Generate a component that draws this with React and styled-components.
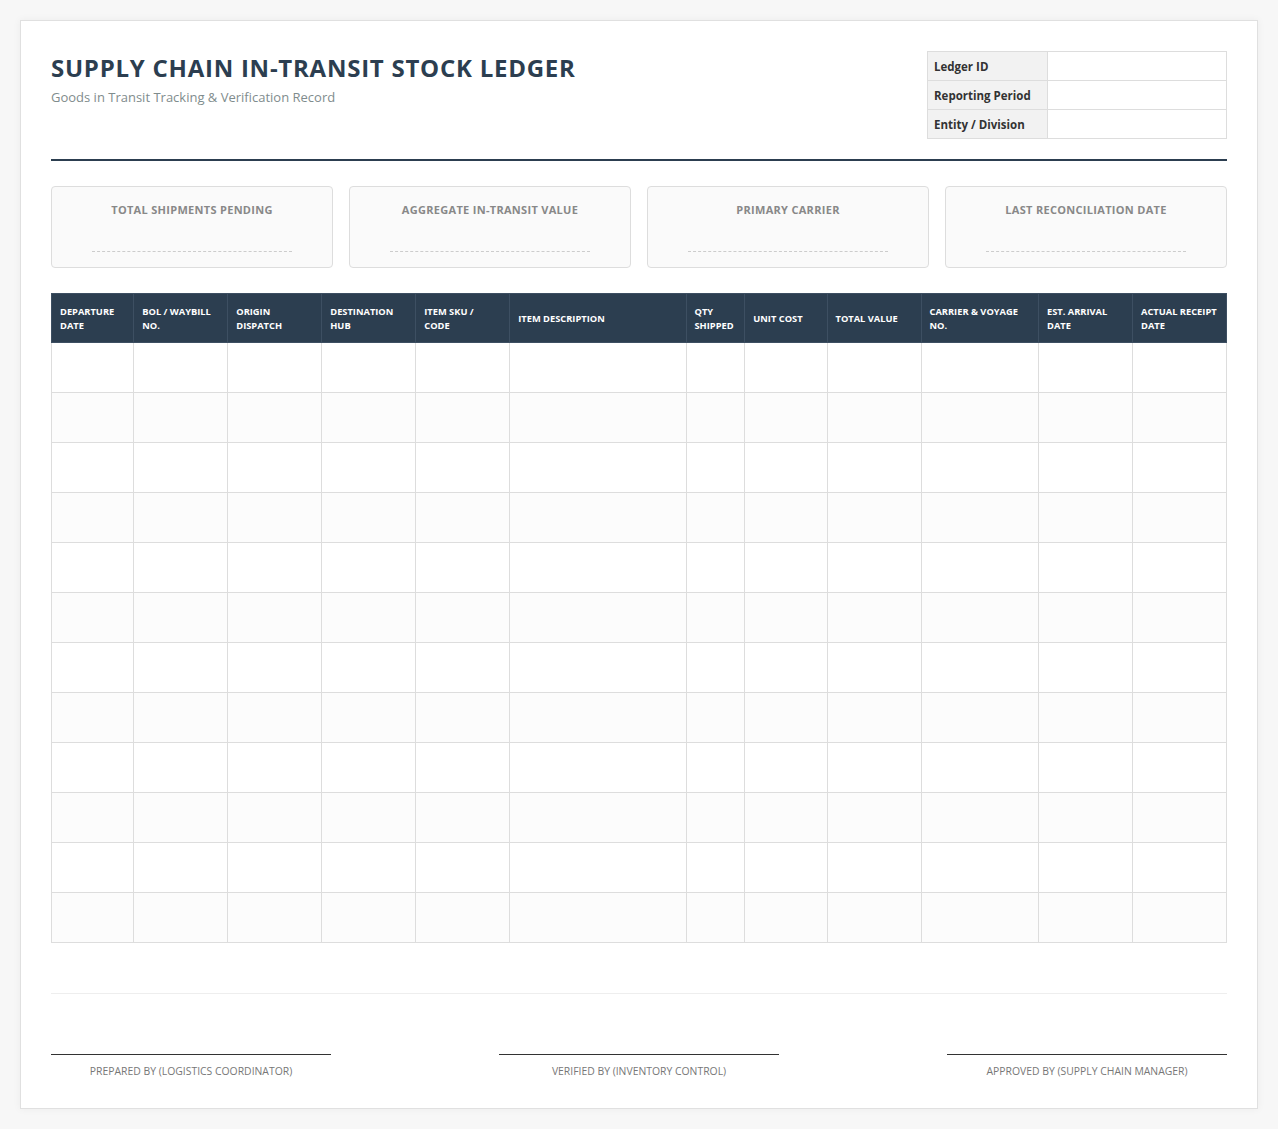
import React from 'react';
import styled, { createGlobalStyle } from 'styled-components';

const GlobalStyle = createGlobalStyle`
  * { box-sizing: border-box; }
  body {
    margin: 0;
    padding: 20px;
    background: #f7f7f7;
    font-family: "Open Sans", "Liberation Sans", sans-serif;
    color: #333;
  }
`

const Page = styled.div`
  background: #fff;
  border: 1px solid #e0e0e0;
  box-shadow: 0 0 8px rgba(0, 0, 0, 0.05);
  padding: 30px;
`

const Header = styled.div`
  display: flex;
  justify-content: space-between;
  align-items: flex-start;
  padding-bottom: 20px;
  border-bottom: 2px solid #2c3e50;
  margin-bottom: 25px;
`

const Title = styled.h1`
  margin: 0;
  padding-top: 1px;
  font-size: 24px;
  line-height: 32px;
  font-weight: 700;
  letter-spacing: 0.75px;
  color: #2c3e50;
`

const Subtitle = styled.div`
  margin-top: 4px;
  font-size: 13px;
  color: #7f8c8d;
`

const MetaTable = styled.table`
  width: 300px;
  border-collapse: collapse;
  font-size: 11.5px;
`

const MetaLabel = styled.td`
  width: 120px;
  height: 29px;
  padding: 0 6px;
  background: #f2f2f2;
  border: 1px solid #ddd;
  font-weight: 700;
  color: #333;
`

const MetaValue = styled.td`
  border: 1px solid #ddd;
`

const Summary = styled.div`
  display: grid;
  grid-template-columns: repeat(4, 1fr);
  gap: 16px;
  margin-bottom: 25px;
`

const Card = styled.div`
  background: #fafafa;
  border: 1px solid #ddd;
  border-radius: 4px;
  padding: 15px;
  text-align: center;
`

const CardLabel = styled.div`
  font-size: 11px;
  font-weight: 700;
  text-transform: uppercase;
  letter-spacing: 0.3px;
  color: #888;
`

const CardValue = styled.div`
  width: 80%;
  height: 35px;
  margin: 0 auto;
  border-bottom: 1px dashed #ccc;
`

const Ledger = styled.table`
  width: 100%;
  border-collapse: collapse;
  table-layout: fixed;
`

const Th = styled.th`
  width: ${p => p.$w}%;
  height: 49px;
  padding: 2px 4px 0 8px;
  background: #2c3e50;
  border: 1px solid #3d4f62;
  color: #fff;
  font-size: 9.3px;
  line-height: 14px;
  font-weight: 700;
  text-align: left;
  text-transform: uppercase;
  white-space: pre-line;
`

const Row = styled.tr`
  background: ${p => (p.$alt ? '#fcfcfc' : '#fff')};
`

const Td = styled.td`
  height: 50px;
  border: 1px solid #ddd;
`

const Footer = styled.div`
  margin-top: 50px;
  padding-top: 60px;
  border-top: 1px solid #eee;
  display: flex;
  justify-content: space-between;
`

const Signature = styled.div`
  width: 280px;
  border-top: 1px solid #333;
  padding-top: 9px;
  text-align: center;
  font-size: 10.4px;
  line-height: 14px;
  color: #777;
`

const columns = [
  ['Departure Date', 7],
  ['BOL / Waybill No.', 8],
  ['Origin Dispatch', 8],
  ['Destination Hub', 8],
  ['Item SKU /\nCode', 8],
  ['Item Description', 15],
  ['Qty Shipped', 5],
  ['Unit Cost', 7],
  ['Total Value', 8],
  ['Carrier & Voyage No.', 10],
  ['Est. Arrival Date', 8],
  ['Actual Receipt Date', 8],
]

const cards = [
  'Total Shipments Pending',
  'Aggregate In-Transit Value',
  'Primary Carrier',
  'Last Reconciliation Date',
]

const meta = ['Ledger ID', 'Reporting Period', 'Entity / Division']

const signatures = [
  'PREPARED BY (LOGISTICS COORDINATOR)',
  'VERIFIED BY (INVENTORY CONTROL)',
  'APPROVED BY (SUPPLY CHAIN MANAGER)',
]

const App = () => {
  return (
    <>
      <GlobalStyle />
      <Page>
        <Header>
          <div>
            <Title>SUPPLY CHAIN IN-TRANSIT STOCK LEDGER</Title>
            <Subtitle>Goods in Transit Tracking &amp; Verification Record</Subtitle>
          </div>
          <MetaTable>
            <tbody>
              {meta.map(m => (
                <tr key={m}>
                  <MetaLabel>{m}</MetaLabel>
                  <MetaValue />
                </tr>
              ))}
            </tbody>
          </MetaTable>
        </Header>

        <Summary>
          {cards.map(c => (
            <Card key={c}>
              <CardLabel>{c}</CardLabel>
              <CardValue />
            </Card>
          ))}
        </Summary>

        <Ledger>
          <thead>
            <tr>
              {columns.map(([name, w]) => (
                <Th key={name} $w={w}>{name}</Th>
              ))}
            </tr>
          </thead>
          <tbody>
            {Array.from({ length: 12 }).map((_, i) => (
              <Row key={i} $alt={i % 2 === 1}>
                {columns.map(([name]) => (
                  <Td key={name} />
                ))}
              </Row>
            ))}
          </tbody>
        </Ledger>

        <Footer>
          {signatures.map(s => (
            <Signature key={s}>{s}</Signature>
          ))}
        </Footer>
      </Page>
    </>
  )
}

export default App;
